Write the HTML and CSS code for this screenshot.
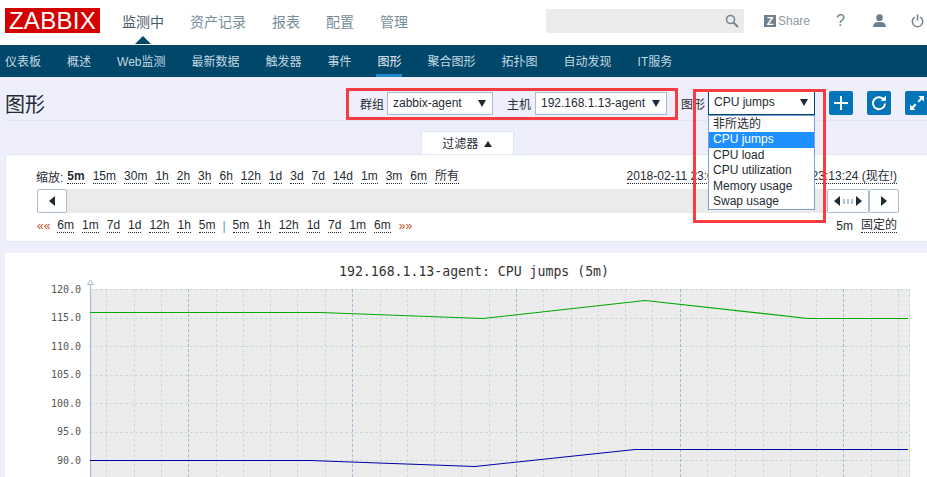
FILE: index.html
```html
<!DOCTYPE html>
<html lang="en">
<head>
    <meta charset="UTF-8">
    <meta name="viewport" content="width=device-width, initial-scale=1.0">
    <title>Zabbix 图形</title>
    <link rel="stylesheet" href="styles.css">
</head>
<body>
<div class="page">
    <header class="topbar">
        <div class="logo">ZABBIX</div>
        <nav class="mainnav">
            <a class="active">监测中</a>
            <a>资产记录</a>
            <a>报表</a>
            <a>配置</a>
            <a>管理</a>
        </nav>
        <div class="search">
            <svg width="14" height="14" viewBox="0 0 14 14"><circle cx="5.5" cy="5.5" r="4" fill="none" stroke="#7a8791" stroke-width="1.6"/><path d="M8.5 8.5L13 13" stroke="#7a8791" stroke-width="2.2"/></svg>
        </div>
        <div class="share"><span class="zbadge">Z</span>Share</div>
        <div class="help">?</div>
        <svg class="usericon" width="15" height="13" viewBox="0 0 16 14"><circle cx="8" cy="4" r="3.6" fill="#6f7f8c"/><path d="M1 14C1 10 4 8.6 8 8.6S15 10 15 14Z" fill="#6f7f8c"/></svg>
        <svg class="powericon" width="13" height="14" viewBox="0 0 14 14"><path d="M4 2.8A5.6 5.6 0 1 0 10 2.8" fill="none" stroke="#6f7f8c" stroke-width="1.6"/><path d="M7 0V6.5" stroke="#6f7f8c" stroke-width="1.6"/></svg>
    </header>

    <nav class="subnav">
        <a>仪表板</a>
        <a>概述</a>
        <a>Web监测</a>
        <a>最新数据</a>
        <a>触发器</a>
        <a>事件</a>
        <a class="active">图形</a>
        <a>聚合图形</a>
        <a>拓扑图</a>
        <a>自动发现</a>
        <a>IT服务</a>
    </nav>

    <div class="titlebar">
        <h1>图形</h1>
        <div class="controls">
            <label>群组</label>
            <div class="select group-select">zabbix-agent</div>
            <label class="host-label">主机</label>
            <div class="select host-select">192.168.1.13-agent</div>
            <label>图形</label>
            <div class="select graph-select focus">CPU jumps
                <ul class="dropdown">
                    <li>非所选的</li>
                    <li class="selected">CPU jumps</li>
                    <li>CPU load</li>
                    <li>CPU utilization</li>
                    <li>Memory usage</li>
                    <li>Swap usage</li>
                </ul>
            </div>
            <button class="iconbtn"><svg width="16" height="16" viewBox="0 0 16 16"><path d="M8 1V15M1 8H15" stroke="#fff" stroke-width="2"/></svg></button>
            <button class="iconbtn"><svg width="16" height="16" viewBox="0 0 16 16"><path d="M13.2 5.2A6 6 0 1 0 14 8.5" fill="none" stroke="#fff" stroke-width="2"/><path d="M9.5 5.8H15V0.5Z" fill="#fff"/></svg></button>
            <button class="iconbtn"><svg width="16" height="16" viewBox="0 0 16 16"><path d="M9.5 1H15V6.5L13 4.5L10 7.5L8.5 6L11.5 3ZM6.5 15H1V9.5L3 11.5L6 8.5L7.5 10L4.5 13Z" fill="#fff"/></svg></button>
        </div>
    </div>

    <div class="filtertab-row">
        <div class="filtertab">过滤器 <span class="up"></span></div>
    </div>
    <section class="filter">
        <div class="timerow zoomrow">
            <div class="links">
                <span class="zoomlabel">缩放:</span>
                <a class="cur">5m</a><a>15m</a><a>30m</a><a>1h</a><a>2h</a><a>3h</a><a>6h</a><a>12h</a><a>1d</a><a>3d</a><a>7d</a><a>14d</a><a>1m</a><a>3m</a><a>6m</a><a>所有</a>
            </div>
            <a class="daterange">2018-02-11 23:08:24 - 2018-02-11 23:13:24 (现在!)</a>
        </div>
        <div class="scrollrow">
            <button class="scrollbtn"><i class="tri-left"></i></button>
            <div class="scrollbar"></div>
            <button class="scrollbtn wide"><i class="tri-left"></i><i class="dots"></i><i class="tri-right"></i></button>
            <button class="scrollbtn"><i class="tri-right"></i></button>
        </div>
        <div class="timerow">
            <div class="links">
                <span class="arrows">««</span>
                <a>6m</a><a>1m</a><a>7d</a><a>1d</a><a>12h</a><a>1h</a><a>5m</a>
                <span class="sep">|</span>
                <a>5m</a><a>1h</a><a>12h</a><a>1d</a><a>7d</a><a>1m</a><a>6m</a>
                <span class="arrows">»»</span>
            </div>
            <div class="links">
                <span>5m</span><a>固定的</a>
            </div>
        </div>
    </section>

    <section class="graph">
        <svg width="929" height="224" viewBox="5 253 929 224">
            <text class="gtitle" x="474" y="276" text-anchor="middle">192.168.1.13-agent: CPU jumps (5m)</text>
            <rect x="90" y="289" width="820" height="188" fill="#ececec"/>
            <!-- grid -->
            <path class="gridline" d="M90 289.5H910M90 318.5H910M90 346.5H910M90 375.5H910M90 403.5H910M90 432.5H910M90 460.5H910"/>
            <path class="gridline" d="M106.5 289V477M134.5 289V477M161.5 289V477M216.5 289V477M243.5 289V477M270.5 289V477M297.5 289V477M325.5 289V477M380.5 289V477M407.5 289V477M434.5 289V477M461.5 289V477M489.5 289V477M543.5 289V477M571.5 289V477M598.5 289V477M625.5 289V477M652.5 289V477M707.5 289V477M735.5 289V477M763.5 289V477M790.5 289V477M816.5 289V477M871.5 289V477M898.5 289V477M909.5 289V477"/>
            <path class="gridmajor" d="M188.5 289V477M352.5 289V477M516.5 289V477M680.5 289V477M843.5 289V477"/>
            <!-- axis -->
            <path d="M90.5 285V477" stroke="#a9bbd6" stroke-width="1.2" fill="none"/>
            <path d="M87.5 284.5L90.5 280L93.5 284.5Z" fill="#fff" stroke="#a9bbd6"/>
            <g class="ylabels" text-anchor="end">
                <text x="81" y="293">120.0</text>
                <text x="81" y="321">115.0</text>
                <text x="81" y="350">110.0</text>
                <text x="81" y="378">105.0</text>
                <text x="81" y="407">100.0</text>
                <text x="81" y="435">95.0</text>
                <text x="81" y="464">90.0</text>
            </g>
            <!-- data -->
            <path d="M90 312.5H320L483 318.5L645 300.5L808 318.5H908" fill="none" stroke="#00a800" stroke-width="1.1"/>
            <path d="M90 460.5H310L475 466.5L635 449.5H908" fill="none" stroke="#0000a8" stroke-width="1.1"/>
        </svg>
    </section>

    <div class="mark mark-hostgroup"></div>
    <div class="mark mark-graph"></div>
</div>
</body>
</html>
```

FILE: styles.css
```css
body {
    margin: 0;
    overflow: hidden;
    background-color: #eeeefc;
    font-family: "Liberation Sans", "Noto Sans CJK SC", sans-serif;
    font-size: 12px;
    color: #1f2c33;
}
.page {
    position: relative;
    width: 934px;
}

/* top bar */
.topbar {
    display: flex;
    align-items: center;
    height: 45px;
    padding-left: 5px;
    padding-bottom: 4px;
    box-sizing: border-box;
    background: white;
}
.logo {
    width: 95px;
    height: 25px;
    line-height: 26px;
    text-align: center;
    background: #d40000;
    color: white;
    font-size: 24px;
    letter-spacing: 0.3px;
}
.mainnav {
    display: flex;
    gap: 26px;
    width: 424px;
    margin-left: 22px;
    font-size: 14px;
    color: #768d99;
}
.mainnav .active {
    position: relative;
    color: #4a5c66;
}
.mainnav .active::after {
    content: "";
    position: absolute;
    left: 13px;
    top: 25px;
    border: 8px solid transparent;
    border-top: 0;
    border-bottom-color: #00476a;
}
.search {
    display: flex;
    align-items: center;
    justify-content: flex-end;
    width: 198px;
    height: 24px;
    padding-right: 5px;
    box-sizing: border-box;
    background: #ebebeb;
}
.share {
    display: flex;
    align-items: center;
    gap: 2px;
    width: 65px;
    margin-left: 20px;
    color: #8b9aa5;
}
.zbadge {
    width: 12px;
    height: 12px;
    line-height: 12px;
    text-align: center;
    background: #6f7f8c;
    color: white;
    font-size: 11px;
    font-weight: bold;
}
.help {
    width: 36px;
    margin-left: 7px;
    font-size: 16px;
    color: #6f7f8c;
}
.usericon {
    margin-left: 0;
}
.powericon {
    margin-left: 24px;
}

/* sub nav */
.subnav {
    display: flex;
    align-items: center;
    gap: 26px;
    height: 32px;
    padding: 0 0 2px 5px;
    box-sizing: border-box;
    background: #00476a;
    color: #c4d8e2;
}
.subnav a {
    white-space: nowrap;
}
.subnav .active {
    position: relative;
    color: #e8f1f5;
}
.subnav .active::after {
    content: "";
    position: absolute;
    left: -2px;
    right: 0;
    bottom: -8px;
    height: 3px;
    background: #1f8acb;
}

/* title row */
.titlebar {
    display: flex;
    justify-content: space-between;
    align-items: center;
    height: 44px;
    margin: 0 5px;
    padding-top: 9px;
    border-bottom: 1px solid #dfe8f0;
    box-sizing: border-box;
}
h1 {
    margin: 0;
    font-size: 20px;
    font-weight: normal;
    color: #1f2c33;
}
.controls {
    display: flex;
    align-items: center;
}
.controls label {
    margin-left: 14px;
    margin-right: 3px;
}
.controls .host-label {
    margin-right: 4px;
}
.select {
    position: relative;
    height: 23px;
    line-height: 21px;
    padding-left: 5px;
    box-sizing: border-box;
    border: 1px solid #acbbcf;
    background: white;
}
.select::after {
    content: "";
    position: absolute;
    right: 6px;
    top: 7px;
    border: 4px solid transparent;
    border-bottom: 0;
    border-top: 7px solid #1f2c33;
}
.group-select { width: 106px; }
.host-select { width: 132px; }
.graph-select { width: 107px; height: 24px; margin-right: 14px; }
.focus { border-color: #00476a; }
.dropdown {
    position: absolute;
    z-index: 5;
    left: -1px;
    top: 23px;
    width: 107px;
    margin: 0;
    padding: 1px 0 0;
    box-sizing: border-box;
    list-style: none;
    border: 1px solid #7c9fdc;
    background: white;
}
.dropdown li {
    height: 15.4px;
    line-height: 15px;
    padding-left: 4px;
}
.dropdown .selected {
    background: #1e90ff;
    color: white;
}
.iconbtn {
    display: flex;
    align-items: center;
    justify-content: center;
    width: 24px;
    height: 24px;
    margin: 0 14px 0 0;
    padding: 0;
    border: none;
    border-radius: 2px;
    background: #0275b8;
}
.iconbtn:last-child {
    margin-right: 0;
}

/* filter */
.filtertab-row {
    display: flex;
    justify-content: center;
    margin-top: 10px;
}
.filtertab {
    width: 93px;
    height: 23px;
    line-height: 25px;
    text-align: center;
    box-sizing: border-box;
    border: 1px solid #dde8f0;
    border-bottom: 0;
    background: white;
}
.up {
    display: inline-block;
    margin-left: 2px;
    vertical-align: 1px;
    border: 4px solid transparent;
    border-top: 0;
    border-bottom: 6px solid #1f2c33;
}
.filter {
    height: 88px;
    margin: 0 5px;
    padding: 11px 29px 0 31px;
    box-sizing: border-box;
    border: 1px solid #dde8f0;
    background: white;
}
.timerow {
    display: flex;
    justify-content: space-between;
    align-items: center;
    height: 21px;
    padding-right: 2px;
}
.zoomrow {
    margin-bottom: 2px;
}
.links {
    display: flex;
    align-items: center;
    gap: 8px;
}
.links a, .daterange {
    border-bottom: 1px dotted #1f2c33;
    line-height: 14px;
    white-space: nowrap;
}
.links .cur {
    font-weight: bold;
}
.zoomlabel {
    margin-left: -1px;
    margin-right: -4px;
}
.arrows {
    color: #c8502a;
}
.arrows:first-child {
    margin-right: -1px;
}
.sep {
    margin: 0 -1px;
    color: #4a90d0;
}
.scrollrow {
    display: flex;
    height: 24px;
    margin-bottom: 2px;
}
.scrollbar {
    flex: 1;
    background: #ebebeb;
}
.scrollbtn {
    display: flex;
    align-items: center;
    justify-content: center;
    gap: 3px;
    width: 30px;
    height: 24px;
    padding: 0;
    border: 1px solid #acbbcf;
    border-radius: 2px;
    background: white;
}
.scrollbtn.wide {
    width: 42px;
}
.tri-left, .tri-right {
    border: 5px solid transparent;
    border-left-width: 0;
    border-right: 6px solid #1f2c33;
}
.tri-right {
    border-right-width: 0;
    border-left: 6px solid #1f2c33;
}
.dots {
    width: 10px;
    height: 5px;
    background: repeating-linear-gradient(90deg, #b5c0cc 0 2px, transparent 2px 4px);
}

/* graph */
.graph {
    margin: 11px 5px 0;
    height: 224px;
    background: white;
}
.graph svg {
    display: block;
}
.gtitle {
    font-family: "DejaVu Sans Mono", monospace;
    font-size: 13.2px;
    fill: #333;
}
.ylabels {
    font-family: "DejaVu Sans Mono", monospace;
    font-size: 10px;
    fill: #555;
}
.gridline {
    fill: none;
    stroke: #c9dcd8;
    stroke-dasharray: 3 2;
}
.gridmajor {
    fill: none;
    stroke: #a3b8d4;
    stroke-dasharray: 3 2;
}

/* red annotation boxes drawn over the screenshot */
.mark {
    position: absolute;
    box-sizing: border-box;
    border: 3px solid #fb3b3f;
    pointer-events: none;
}
.mark-hostgroup {
    left: 346px;
    top: 88px;
    width: 332px;
    height: 32px;
}
.mark-graph {
    left: 693px;
    top: 89px;
    width: 133px;
    height: 134px;
}
```
